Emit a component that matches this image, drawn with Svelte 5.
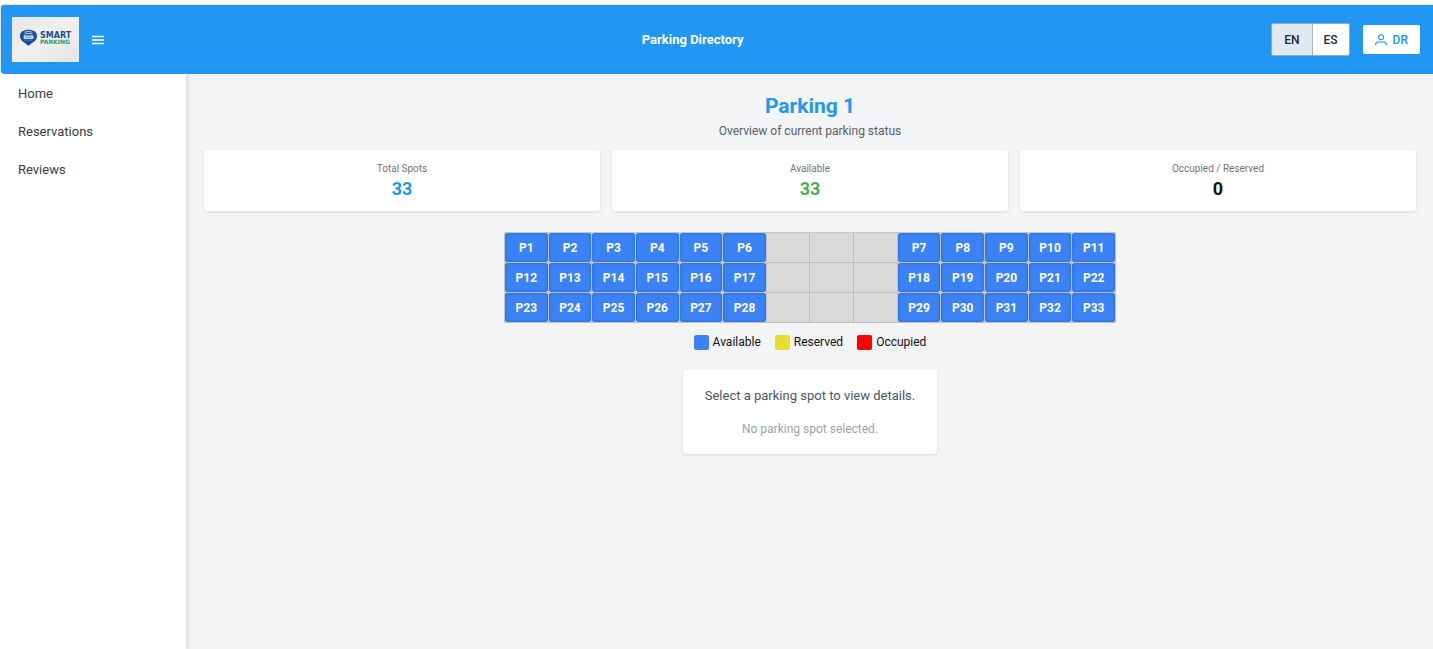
<script>
  let language = $state('EN');
  let selected = $state(null);

  const links = ['Home', 'Reservations', 'Reviews'];
  const stats = [
    { label: 'Total Spots', value: 33, tone: 'blue' },
    { label: 'Available', value: 33, tone: 'green' },
    { label: 'Occupied / Reserved', value: 0, tone: 'black' }
  ];
  const legend = [
    { label: 'Available', tone: 'available' },
    { label: 'Reserved', tone: 'reserved' },
    { label: 'Occupied', tone: 'occupied' }
  ];

  // Each row holds six spots, a three-cell lane, then five spots.
  let next = 1;
  const cells = [];
  for (let row = 0; row < 3; row++) {
    for (let col = 0; col < 14; col++) {
      cells.push(col > 5 && col < 9 ? null : `P${next++}`);
    }
  }
</script>

<div class="page">
  <header class="topbar">
    <div class="side">
      <svg class="logo" viewBox="0 0 67 45" role="img" aria-label="Smart Parking">
        <defs>
          <linearGradient id="plate" x1="0" y1="0" x2="1" y2="1">
            <stop offset="0" stop-color="#e6e6e6" />
            <stop offset="0.5" stop-color="#f1f0ef" />
            <stop offset="1" stop-color="#e5e4e4" />
          </linearGradient>
        </defs>
        <rect width="67" height="45" fill="url(#plate)" />
        <path d="M16.500 29 C13.500 25.500 8 24.500 8 19 C8 15 11.500 12.800 16.500 12.800 S25 15 25 19 C25 24.500 19.500 25.500 16.500 29Z" fill="#134f9e" />
        <path d="M12.500 15.300Q16.500 13.300 20.500 15.300M12.500 18.300L13.800 16.500H19.200L20.500 18.300" fill="none" stroke="#b9cde4" stroke-width="1" />
        <rect x="11.500" y="18.500" width="10" height="3.500" rx="1" fill="#c9d9ea" />
        <path d="M13.500 20.300H19.500M12.500 23.200H20.500" stroke="#5b86bb" stroke-width="0.800" />
        <text x="28" y="21" class="smart">SMART</text>
        <text x="28" y="27" class="parking">PARKING</text>
      </svg>
      <button class="menu" aria-label="Toggle menu">
        <svg width="12" height="10" viewBox="0 0 12 10"><path d="M0 1.500H12M0 5H12M0 8.500H12" stroke="#fff" stroke-width="1.300" /></svg>
      </button>
    </div>
    <div class="title">Parking Directory</div>
    <div class="side">
      <div class="langs">
        {#each ['EN', 'ES'] as code}
          <button class:active={language === code} onclick={() => (language = code)}>{code}</button>
        {/each}
      </div>
      <button class="user">
        <svg width="12" height="12" viewBox="0 0 12 12" fill="none" stroke="#2196f3" stroke-width="1.100" stroke-linecap="round"><circle cx="6" cy="3.300" r="2.500" /><path d="M0.600 10.800V10.400Q0.900 8 3.400 8H8.600Q11.100 8 11.400 10.400V10.800" /></svg>
        DR
      </button>
    </div>
  </header>

  <div class="body">
    <nav>
      {#each links as link}
        <a href="#{link.toLowerCase()}">{link}</a>
      {/each}
    </nav>
    <main>
      <h1>Parking 1</h1>
      <p class="subtitle">Overview of current parking status</p>

      <section class="stats">
        {#each stats as stat}
          <div class="card stat">
            <span class="label">{stat.label}</span>
            <strong class={stat.tone}>{stat.value}</strong>
          </div>
        {/each}
      </section>

      <div class="lot">
        {#each cells as cell}
          <div class="cell">
            {#if cell}
              <button onclick={() => (selected = cell)}>{cell}</button>
            {/if}
          </div>
        {/each}
      </div>

      <div class="legend">
        {#each legend as item}
          <span class="key"><i class={item.tone}></i>{item.label}</span>
        {/each}
      </div>

      <section class="card details">
        <p class="prompt">Select a parking spot to view details.</p>
        <p class="none">{selected ?? 'No parking spot selected.'}</p>
      </section>
    </main>
  </div>
</div>

<style>
  :global(body) {
    background: #fff;
  }
  .page {
    display: flex;
    flex-direction: column;
    min-height: 100vh;
    box-sizing: border-box;
    padding-top: 4px;
    font-family: Roboto, sans-serif;
    color: #111;
  }
  button {
    font: inherit;
    border: 0;
    padding: 0;
    cursor: pointer;
  }
  p,
  h1 {
    margin: 0;
  }
  .topbar {
    display: flex;
    align-items: center;
    justify-content: space-between;
    height: 69px;
    padding: 0 13px 0 11px;
    background: #2196f3;
    border: 1px solid #e2e8f0;
    border-bottom: 0;
    border-right: 0;
    border-radius: 4px 0 0 4px;
  }
  .side {
    display: flex;
    align-items: center;
    gap: 13px;
  }
  .logo {
    width: 67px;
    height: 45px;
  }
  .smart,
  .parking {
    font-family: "DejaVu Sans", sans-serif;
    font-weight: 700;
  }
  .smart {
    font-size: 8px;
    fill: #1b4f93;
  }
  .parking {
    font-size: 6px;
    fill: #2d9a5f;
  }
  .menu {
    display: flex;
    padding: 8px 10px 8px 0;
    background: none;
  }
  .title {
    font-size: 13px;
    font-weight: 700;
    color: #fff;
  }
  .langs {
    display: flex;
    border: 1px solid #94a9cf;
    border-radius: 2px;
    overflow: hidden;
  }
  .langs button {
    height: 31px;
    padding: 0 12px;
    background: #fff;
    color: #1e293b;
    font-size: 12px;
    font-weight: 500;
  }
  .langs button + button {
    padding: 0 11px;
    border-left: 1px solid #a3b4d0;
  }
  .langs .active {
    background: #e2e8f0;
  }
  .user {
    display: flex;
    align-items: center;
    gap: 6px;
    height: 29px;
    padding: 0 12px;
    background: #fff;
    border-radius: 2px;
    color: #2196f3;
    font-size: 12px;
    font-weight: 500;
  }
  .body {
    display: flex;
    flex: 1;
  }
  nav {
    display: flex;
    flex: 0 0 186px;
    flex-direction: column;
    box-sizing: border-box;
    padding: 1px 12px;
    background: #fff;
    box-shadow: 2px 0 4px rgba(0, 0, 0, 0.12);
    clip-path: inset(0 -8px 0 0);
  }
  nav a {
    padding: 0 6px;
    color: #3d3d3d;
    font-size: 13px;
    line-height: 38px;
    text-decoration: none;
  }
  main {
    display: flex;
    flex: 1;
    flex-direction: column;
    align-items: center;
    padding: 18px 17px 17px 18px;
    background: #f3f4f6;
  }
  h1 {
    color: #2196f3;
    font-size: 21px;
    font-weight: 700;
    line-height: 28px;
  }
  .subtitle {
    margin-top: 1px;
    color: #5a6068;
    font-size: 12px;
    line-height: 20px;
  }
  .card {
    background: #fff;
    border-radius: 3px;
    box-shadow: 0 1px 3px rgba(0, 0, 0, 0.12);
  }
  .stats {
    display: grid;
    grid-template-columns: repeat(3, 1fr);
    gap: 12px;
    align-self: stretch;
    margin-top: 9px;
  }
  .stat {
    display: flex;
    flex-direction: column;
    align-items: center;
    padding: 10px 12px;
  }
  .label {
    color: #757575;
    font-size: 10px;
    line-height: 17px;
  }
  .stat strong {
    font-size: 18px;
    line-height: 24px;
  }
  .blue {
    color: #2196f3;
  }
  .green {
    color: #4caf50;
  }
  .lot {
    display: grid;
    grid-template-columns: repeat(14, 1fr);
    grid-auto-rows: 30px;
    box-sizing: border-box;
    width: min(100%, 612px);
    margin-top: 21px;
    border: solid #c6c6c6;
    border-width: 1px 0 0 1px;
  }
  .cell {
    display: flex;
    background: #d9d9d9;
    border: solid #c0c0c0;
    border-width: 0 1px 1px 0;
  }
  .cell button {
    flex: 1;
    background: #3b82f6;
    border-radius: 3px;
    box-shadow: inset 0 0 3px #2563c8;
    color: #fff;
    font-size: 12px;
    font-weight: 700;
  }
  .legend {
    display: flex;
    gap: 14px;
    margin-top: 11px;
    font-size: 12px;
    line-height: 16px;
  }
  .key {
    display: flex;
    align-items: center;
    gap: 4px;
  }
  .key i {
    width: 15px;
    height: 15px;
    border-radius: 2px;
  }
  .available {
    background: #3b82f6;
  }
  .reserved {
    background: #e8de30;
  }
  .occupied {
    background: #f00;
  }
  .details {
    margin-top: 20px;
    padding: 16px 22px;
    text-align: center;
  }
  .prompt {
    color: #4b5563;
    font-size: 13px;
    line-height: 20px;
  }
  .none {
    margin-top: 14px;
    color: #9ca3af;
    font-size: 12px;
    line-height: 18px;
  }
</style>
